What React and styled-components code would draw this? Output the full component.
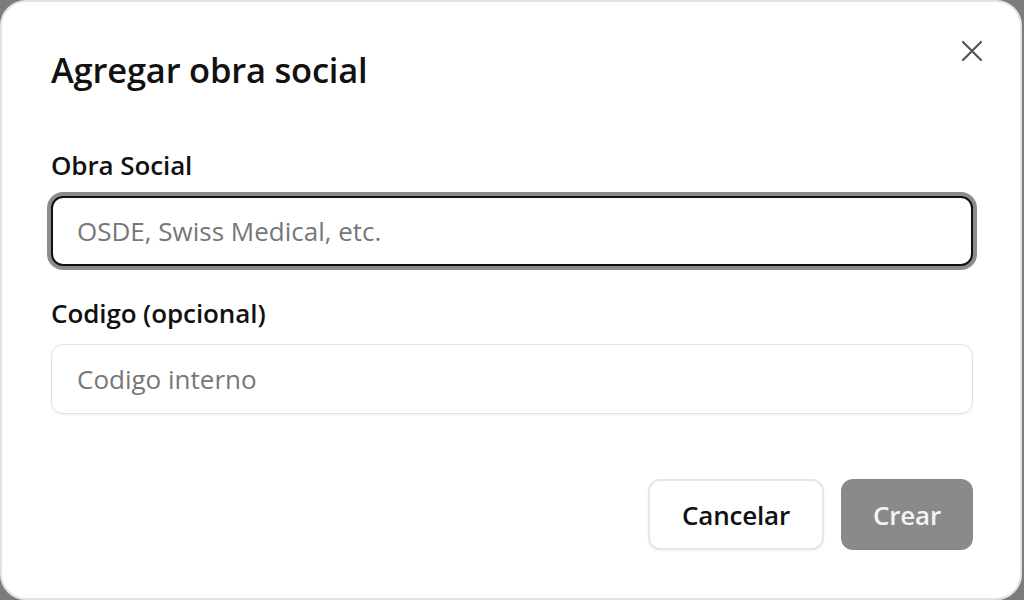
import React from "react";
import styled, { createGlobalStyle } from "styled-components";

const GlobalStyle = createGlobalStyle`
  html, body {
    margin: 0;
    padding: 0;
    height: 100%;
    background: #7c7c7c;
    overflow: hidden;
  }
  #root {
    height: 100%;
  }
  * {
    box-sizing: border-box;
  }
`;

const Backdrop = styled.div`
  height: 600px;
  width: 1024px;
  background: #7c7c7c;
  display: flex;
`;

const Dialog = styled.div`
  position: relative;
  width: 1022px;
  height: 600px;
  background: #ffffff;
  border: 2px solid #e3e3e3;
  border-radius: 26px;
  padding: 44px 47px 0 49px;
  font-family: "Open Sans", "Noto Sans", sans-serif;
  color: #111111;
  display: flex;
  flex-direction: column;
`;

const Title = styled.h2`
  margin: 0;
  font-size: 34.5px;
  font-weight: 600;
  line-height: 48px;
  letter-spacing: -0.2px;
`;

const CloseButton = styled.button`
  position: absolute;
  top: 37px;
  right: 36px;
  width: 24px;
  height: 24px;
  padding: 0;
  border: none;
  background: transparent;
  color: #555555;
  display: flex;
  align-items: center;
  justify-content: center;
  cursor: pointer;
`;

const Form = styled.div`
  margin-top: 54px;
  display: flex;
  flex-direction: column;
  gap: 30px;
`;

const Field = styled.div`
  display: flex;
  flex-direction: column;
  gap: 14px;
`;

const Label = styled.label`
  font-size: 26px;
  font-weight: 600;
  line-height: 34px;
  letter-spacing: -0.1px;
`;

const Input = styled.input`
  width: 100%;
  height: 70px;
  padding: 0 25px;
  font-family: inherit;
  font-size: 26px;
  color: #111111;
  background: #ffffff;
  border-radius: 12px;
  outline: none;
  border: ${(p) => (p.focused ? "2px solid #111111" : "1px solid #e2e2e2")};
  box-shadow: ${(p) =>
    p.focused ? "0 0 0 4px #8c8c8c" : "0 1px 3px rgba(0, 0, 0, 0.05)"};
  padding-left: ${(p) => (p.focused ? "24px" : "25px")};
  &::placeholder {
    color: #777777;
  }
`;

const Footer = styled.div`
  margin-top: 65px;
  display: flex;
  justify-content: flex-end;
  gap: 17px;
`;

const Button = styled.button`
  height: 71px;
  padding: 0 32px;
  border-radius: 12px;
  font-family: inherit;
  font-size: 26px;
  font-weight: 600;
  letter-spacing: -0.2px;
  cursor: pointer;
  border: ${(p) => (p.primary ? "none" : "2px solid #e6e6e6")};
  background: ${(p) => (p.primary ? "#8a8a8a" : "#ffffff")};
  color: ${(p) => (p.primary ? "#f4f4f4" : "#111111")};
  box-shadow: ${(p) => (p.primary ? "none" : "0 1px 3px rgba(0, 0, 0, 0.05)")};
`;

const CloseIcon = () => (
  <svg width="24" height="24" viewBox="0 0 24 24" fill="none" stroke="currentColor" strokeWidth="2.2" strokeLinecap="round">
    <path d="M3 3L21 21M21 3L3 21" />
  </svg>
);

export default function App() {
  return (
    <>
      <GlobalStyle />
      <Backdrop>
        <Dialog>
          <Title>Agregar obra social</Title>
          <CloseButton aria-label="Cerrar">
            <CloseIcon />
          </CloseButton>
          <Form>
            <Field>
              <Label>Obra Social</Label>
              <Input focused placeholder="OSDE, Swiss Medical, etc." />
            </Field>
            <Field>
              <Label>Codigo (opcional)</Label>
              <Input placeholder="Codigo interno" />
            </Field>
          </Form>
          <Footer>
            <Button>Cancelar</Button>
            <Button primary disabled>Crear</Button>
          </Footer>
        </Dialog>
      </Backdrop>
    </>
  );
}
